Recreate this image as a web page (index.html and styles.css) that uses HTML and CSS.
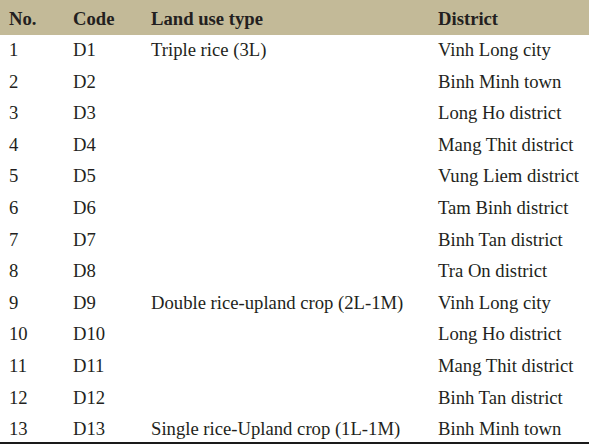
FILE: index.html
```html
<!DOCTYPE html>
<html>
<head>
<meta charset="utf-8">
<link rel="stylesheet" href="styles.css">
</head>
<body>
<table class="tbl">
  <colgroup>
    <col class="c1"><col class="c2"><col class="c3"><col class="c4">
  </colgroup>
  <thead>
    <tr><th>No.</th><th>Code</th><th>Land use type</th><th>District</th></tr>
  </thead>
  <tbody>
    <tr><td>1</td><td>D1</td><td>Triple rice (3L)</td><td>Vinh Long city</td></tr>
    <tr><td>2</td><td>D2</td><td></td><td>Binh Minh town</td></tr>
    <tr><td>3</td><td>D3</td><td></td><td>Long Ho district</td></tr>
    <tr><td>4</td><td>D4</td><td></td><td>Mang Thit district</td></tr>
    <tr><td>5</td><td>D5</td><td></td><td>Vung Liem district</td></tr>
    <tr><td>6</td><td>D6</td><td></td><td>Tam Binh district</td></tr>
    <tr><td>7</td><td>D7</td><td></td><td>Binh Tan district</td></tr>
    <tr><td>8</td><td>D8</td><td></td><td>Tra On district</td></tr>
    <tr><td>9</td><td>D9</td><td>Double rice-upland crop (2L-1M)</td><td>Vinh Long city</td></tr>
    <tr><td>10</td><td>D10</td><td></td><td>Long Ho district</td></tr>
    <tr><td>11</td><td>D11</td><td></td><td>Mang Thit district</td></tr>
    <tr><td>12</td><td>D12</td><td></td><td>Binh Tan district</td></tr>
    <tr class="last"><td>13</td><td>D13</td><td>Single rice-Upland crop (1L-1M)</td><td>Binh Minh town</td></tr>
  </tbody>
</table>
</body>
</html>
```
FILE: styles.css
```css
html, body {
  margin: 0;
  padding: 0;
  background: #ffffff;
}
.tbl {
  width: 589px;
  border-collapse: collapse;
  table-layout: fixed;
  font-family: "Liberation Serif", "Times New Roman", serif;
  font-size: 18.67px;
  line-height: 21px;
  color: #231f20;
  border-bottom: 2px solid #1a1a1a;
}
.c1 { width: 64px; }
.c2 { width: 78px; }
.c3 { width: 287px; }
.c4 { width: 160px; }
.tbl th, .tbl td {
  text-align: left;
  padding: 0 0 0 9px;
  white-space: nowrap;
  vertical-align: top;
}
.tbl thead th {
  background: #c3ba98;
  font-weight: bold;
  padding-top: 8.2px;
  padding-bottom: 5.8px;
}
.tbl tbody td {
  padding-top: 4.2px;
  padding-bottom: 6.4px;
}
.tbl tbody tr.last td {
  padding-bottom: 2.6px;
}
```
